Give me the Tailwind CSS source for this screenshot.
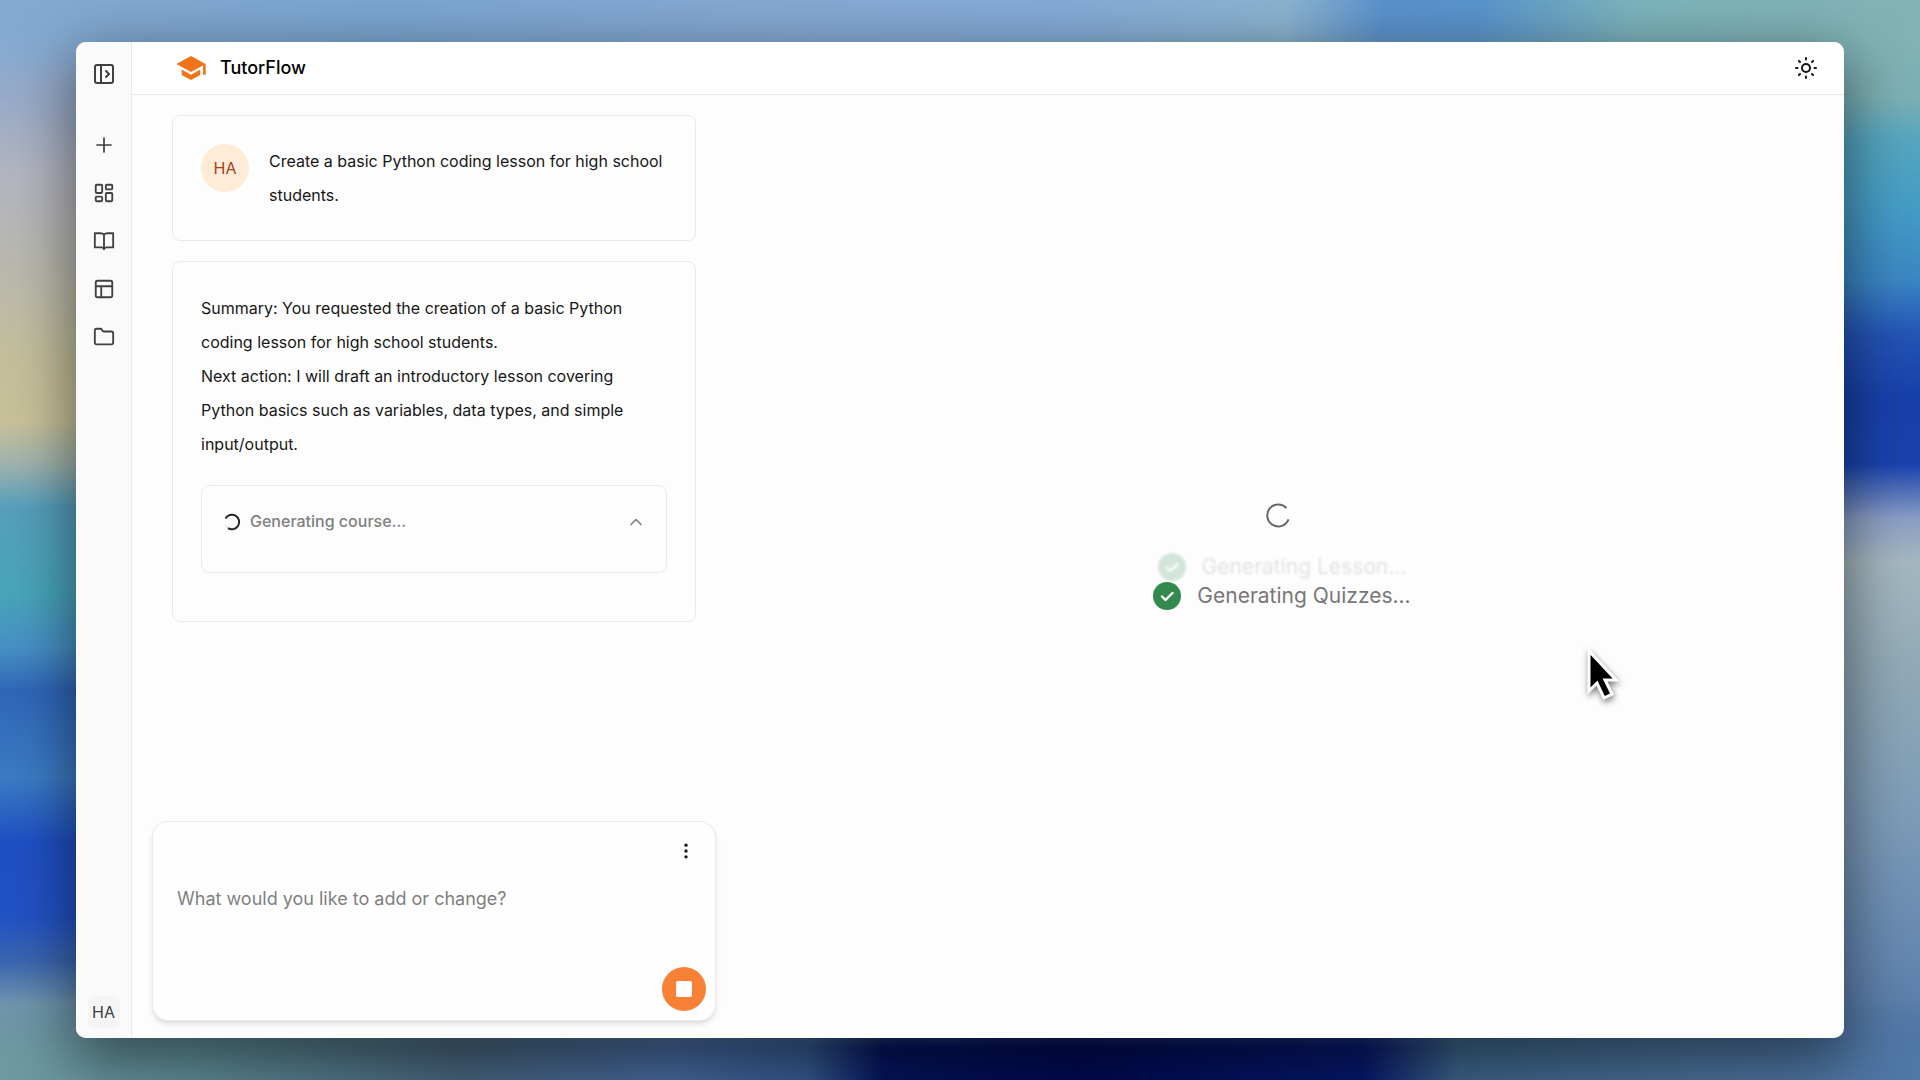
<!DOCTYPE html>
<html lang="en">
<head>
  <meta charset="UTF-8">
  <meta name="viewport" content="width=device-width, initial-scale=1.0">
  <title>TutorFlow</title>
  <script src="https://cdn.jsdelivr.net/npm/@tailwindcss/browser@4"></script>
</head>
<body class="relative h-screen overflow-hidden bg-[#5c86b4] px-19 py-[42px] font-[Inter,sans-serif] text-neutral-900">

  <!-- Blurred wallpaper -->
  <div class="absolute inset-0 flex" aria-hidden="true">
    <div class="flex-1 bg-[linear-gradient(to_bottom,#83abd3_0%,#97abc9_9%,#b3b5c0_16%,#b9b8b0_24%,#c3bf9c_33%,#c8c19a_39%,#9fb3ae_43%,#569fbd_47%,#48a5bb_55%,#4690c5_60%,#3066b8_64%,#3b7cc4_72%,#1f4fc4_78%,#2352c4_85%,#3a66b0_89%,#7095ae_93%,#6a929f_100%)]"></div>
    <div class="flex-1 bg-[linear-gradient(to_bottom,#82b2b8_0%,#7cb0b4_9%,#55a6c0_13%,#459dc5_19%,#3a86c4_26%,#2454b6_31%,#1740aa_37%,#1a43ae_43%,#8a9ec5_48%,#a5b8c0_52%,#91aab8_62%,#7f9db8_75%,#6385b0_90%,#4a70a0_100%)]"></div>
  </div>
  <div class="absolute inset-x-0 top-0 h-20 mask-b-from-40% bg-[linear-gradient(to_right,#85aad2_0%,#7aa6d2_20%,#86a9d4_40%,#84abd8_55%,#8bb4d0_67%,#5b92cc_72%,#5a94cc_77%,#7cb4bc_85%,#82b3b6_100%)]" aria-hidden="true"></div>
  <div class="absolute inset-x-0 bottom-0 h-20 mask-t-from-40% bg-[linear-gradient(to_right,#6f9aa4_0%,#5f8d98_10%,#46647c_24%,#46689c_35%,#34588c_42%,#04145c_46%,#000a50_56%,#06186a_71%,#3c6488_76%,#4a7098_88%,#5078a8_100%)]" aria-hidden="true"></div>

  <div class="relative flex h-full overflow-hidden rounded-[10px] bg-[#fdfdfd] shadow-[0_18px_60px_4px_rgba(0,0,0,0.5)]">

    <!-- Sidebar -->
    <nav class="flex w-14 shrink-0 flex-col items-center border-r border-neutral-200/80 bg-neutral-50 pt-3 pb-[10px] text-neutral-700" aria-label="Main">
      <button class="flex size-10 items-center justify-center" aria-label="Open sidebar">
        <svg class="size-6" viewBox="0 0 24 24" fill="none" stroke="currentColor" stroke-width="2" stroke-linecap="round" stroke-linejoin="round"><rect x="3" y="3" width="18" height="18" rx="2"/><path d="M9 3v18M14 9l3 3-3 3"/></svg>
      </button>
      <div class="mt-[27px] flex flex-col">
        <a href="#new" class="flex h-12 w-10 items-center justify-center" aria-label="New">
          <svg class="size-6" viewBox="0 0 24 24" fill="none" stroke="currentColor" stroke-width="1.700" stroke-linecap="round" stroke-linejoin="round"><path d="M5 12h14M12 5v14"/></svg>
        </a>
        <a href="#dashboard" class="flex h-12 w-10 items-center justify-center" aria-label="Dashboard">
          <svg class="size-[22px]" viewBox="0 0 24 24" fill="none" stroke="currentColor" stroke-width="2" stroke-linecap="round" stroke-linejoin="round"><rect x="3" y="3" width="7" height="9" rx="1"/><rect x="14" y="3" width="7" height="5" rx="1"/><rect x="14" y="12" width="7" height="9" rx="1"/><rect x="3" y="16" width="7" height="5" rx="1"/></svg>
        </a>
        <a href="#courses" class="flex h-12 w-10 items-center justify-center" aria-label="Courses">
          <svg class="size-[22px]" viewBox="0 0 24 24" fill="none" stroke="currentColor" stroke-width="2" stroke-linecap="round" stroke-linejoin="round"><path d="M12 5v16M12 5C11 4 9.500 3.500 8 3.500H2V19h7c1.500 0 2.500.5 3 2 .5-1.500 1.500-2 3-2h7V3.500h-6c-1.500 0-3 .5-4 1.500z"/></svg>
        </a>
        <a href="#templates" class="flex h-12 w-10 items-center justify-center" aria-label="Templates">
          <svg class="size-[22px]" viewBox="0 0 24 24" fill="none" stroke="currentColor" stroke-width="2" stroke-linecap="round" stroke-linejoin="round"><rect x="3" y="3" width="18" height="18" rx="2"/><path d="M3 9h18M9 21V9"/></svg>
        </a>
        <a href="#files" class="flex h-12 w-10 items-center justify-center" aria-label="Files">
          <svg class="size-[22px]" viewBox="0 0 24 24" fill="none" stroke="currentColor" stroke-width="2" stroke-linecap="round" stroke-linejoin="round"><path d="M20 20a2 2 0 0 0 2-2V8a2 2 0 0 0-2-2h-7.900a2 2 0 0 1-1.690-.9L9.600 3.900A2 2 0 0 0 7.930 3H4a2 2 0 0 0-2 2v13a2 2 0 0 0 2 2Z"/></svg>
        </a>
      </div>
      <button class="mt-auto flex size-8 items-center justify-center rounded-md bg-neutral-100 text-base">HA</button>
    </nav>

    <div class="flex min-w-0 flex-1 flex-col">
      <header class="flex h-[53px] shrink-0 items-center border-b border-neutral-200/80 bg-white pr-6 pl-[43px]">
        <a href="#home" class="flex items-center gap-[13px] text-lg font-medium text-black">
          <svg class="size-8" viewBox="0 0 24 24" fill="#f0751a"><path d="M5 13.180v4L12 21l7-3.820v-4L12 17z"/><path d="M12 3 1 9l11 6 9-4.910V17h2V9z"/></svg>
          TutorFlow
        </a>
        <button class="ml-auto flex size-7 items-center justify-center" aria-label="Toggle theme">
          <svg class="size-6" viewBox="0 0 24 24" fill="none" stroke="#171717" stroke-width="2" stroke-linecap="round"><circle cx="12" cy="12" r="4"/><path d="M12 2v1.500M12 20.500v1.500M4.930 4.930l1.100 1.100M17.970 17.970l1.100 1.100M2 12h1.500M20.500 12h1.500M6.030 17.970l-1.100 1.100M19.070 4.930l-1.100 1.100"/></svg>
        </button>
      </header>

      <div class="flex min-h-0 flex-1">
        <!-- Chat -->
        <section class="flex w-[584px] shrink-0 flex-col pb-[17px] pl-5">
          <div class="flex min-h-0 flex-1 flex-col gap-5 px-5 pt-5 text-base leading-[34px]">
            <article class="flex gap-5 rounded-lg border border-neutral-200/80 p-7">
              <div class="flex size-12 shrink-0 items-center justify-center rounded-full bg-[#feecd7] text-base text-[#a8401c]">HA</div>
              <p>Create a basic Python coding lesson for high school students.</p>
            </article>
            <article class="rounded-lg border border-neutral-200/80 px-7 pt-[29px] pb-12">
              <p>Summary: You requested the creation of a basic Python coding lesson for high school students.</p>
              <p>Next action: I will draft an introductory lesson covering Python basics such as variables, data types, and simple input/output.</p>
              <button class="mt-6 flex h-[88px] w-full items-start gap-2 rounded-lg border border-neutral-200/80 px-5 pt-[18px] text-left font-medium text-[#808080]">
                <svg class="mt-2 size-5" viewBox="0 0 20 20" fill="none" stroke="#262626" stroke-width="2"><path d="M3.500 6.500A7.300 7.300 0 1 1 6 16.200"/><path d="M6 16.200A7.300 7.300 0 0 1 3 12.500" stroke="#d4d4d4" stroke-width="1"/></svg>
                Generating course...
                <svg class="mt-2 ml-auto size-5" viewBox="0 0 24 24" fill="none" stroke="currentColor" stroke-width="2" stroke-linecap="round" stroke-linejoin="round"><path d="m18 15-6-6-6 6"/></svg>
              </button>
            </article>
          </div>

          <form class="flex h-[200px] flex-col rounded-2xl border border-neutral-200/80 bg-[#fefefe] shadow-md">
            <div class="flex justify-end px-[15px] pt-[15px]">
              <button type="button" class="flex size-7 items-center justify-center" aria-label="More options">
                <svg class="size-5" viewBox="0 0 24 24" fill="#171717"><circle cx="12" cy="5" r="2"/><circle cx="12" cy="12" r="2"/><circle cx="12" cy="19" r="2"/></svg>
              </button>
            </div>
            <textarea class="min-h-0 flex-1 resize-none px-6 pt-5 text-lg outline-none placeholder:text-[#808080]" aria-label="Message" placeholder="What would you like to add or change?"></textarea>
            <div class="flex justify-end px-[9px] pb-[9px]">
              <button type="button" class="flex size-11 items-center justify-center rounded-full bg-[#f88135]" aria-label="Stop generating">
                <span class="size-4 rounded-xs bg-white"></span>
              </button>
            </div>
          </form>
        </section>

        <!-- Generation progress -->
        <main class="flex min-w-0 flex-1 flex-col items-center justify-center pr-1 pb-[22px]">
          <svg class="size-7" viewBox="0 0 28 28" fill="none" stroke="#666" stroke-width="2"><path d="M22.500 7.200A11 11 0 1 0 24.500 18.400"/></svg>
          <ul class="mt-6 flex flex-col items-center pl-2 text-[21px] text-[#777]">
            <li class="flex h-[29px] items-center gap-4 opacity-20 blur-[1px]">
              <svg class="size-7" viewBox="0 0 28 28"><circle cx="14" cy="14" r="14" fill="#338a50"/><path d="m9 14.500 3.500 3.500 7-7" fill="none" stroke="#fff" stroke-width="2.400" stroke-linecap="round" stroke-linejoin="round"/></svg>
              Generating Lesson...
            </li>
            <li class="flex h-[29px] items-center gap-4">
              <svg class="size-7" viewBox="0 0 28 28"><circle cx="14" cy="14" r="14" fill="#338a50"/><path d="m9 14.500 3.500 3.500 7-7" fill="none" stroke="#fff" stroke-width="2.400" stroke-linecap="round" stroke-linejoin="round"/></svg>
              Generating Quizzes...
            </li>
          </ul>
        </main>
      </div>
    </div>
  </div>

  <!-- Mouse pointer -->
  <svg class="absolute top-[646px] left-[1582px] h-14 w-10 drop-shadow-[1px_3px_3px_rgba(0,0,0,0.5)]" viewBox="0 0 40 56" aria-hidden="true"><path d="M7 5v40l8-8 7 15 8-4-7-14h11z" fill="#000" stroke="#fff" stroke-width="3"/></svg>
</body>
</html>
